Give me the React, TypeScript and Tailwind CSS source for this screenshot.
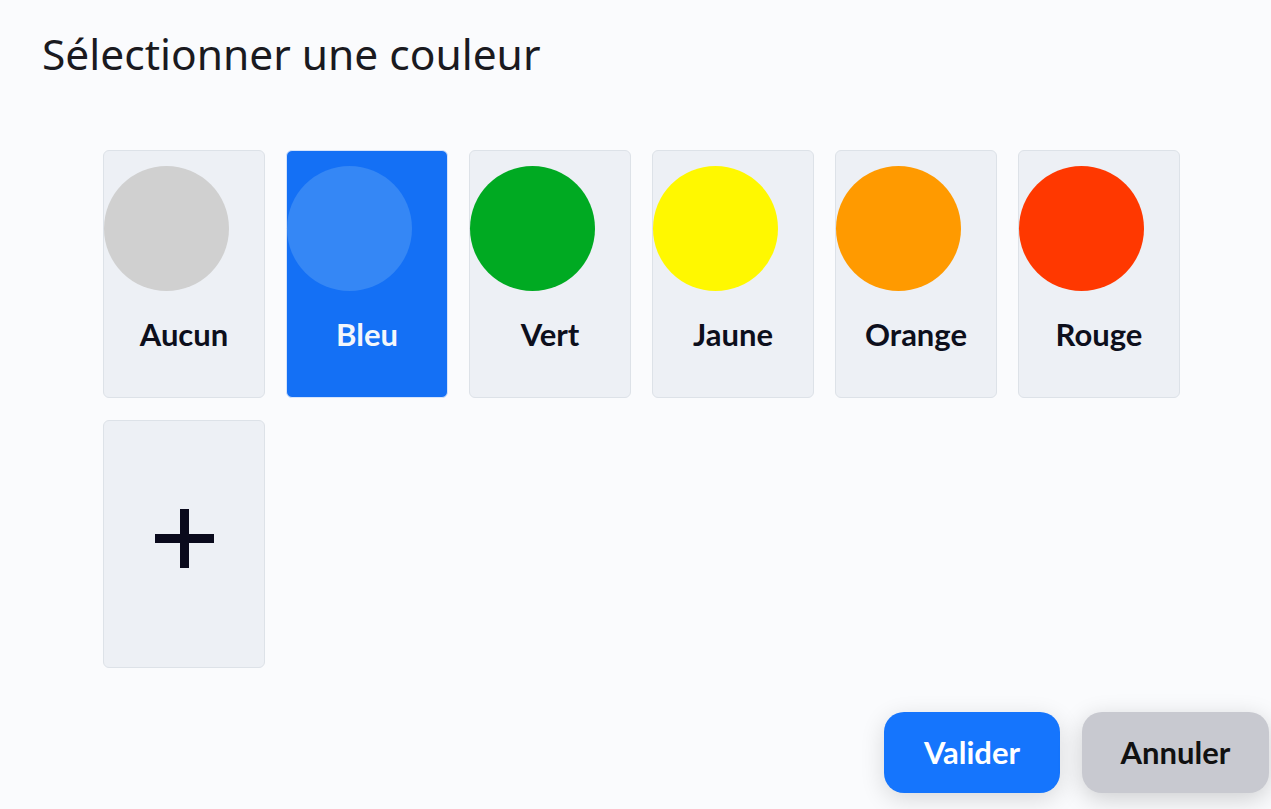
import React from "react";

const colors = [
  { name: "Aucun", color: "bg-[#d0d0d0]", selected: false },
  { name: "Bleu", color: "bg-[#3587f5]", selected: true },
  { name: "Vert", color: "bg-[#00aa22]", selected: false },
  { name: "Jaune", color: "bg-[#fff800]", selected: false },
  { name: "Orange", color: "bg-[#ff9a00]", selected: false },
  { name: "Rouge", color: "bg-[#ff3800]", selected: false },
];

export default function App() {
  return (
    <div className="w-[1271px] h-[809px] bg-[#fafbfd] relative overflow-hidden" style={{ fontFamily: "Lato, sans-serif" }}>
      <h1 className="pl-[42px] pt-[26px] text-[42.5px] leading-[56px] text-[#1a1a1f]" style={{ fontFamily: "'Noto Sans', sans-serif" }}>
        Sélectionner une couleur
      </h1>
      <div className="ml-[103px] mt-[68px] grid grid-cols-[repeat(6,162px)] gap-x-[21px] gap-y-[22px]">
        {colors.map((c) => (
          <div
            key={c.name}
            className={`h-[248px] rounded-[6px] border pt-[15px] flex flex-col ${
              c.selected ? "bg-[#1470f5] border-[#d6e4fb]" : "bg-[#edf0f5] border-[#dde2e8]"
            }`}
          >
            <div className={`w-[125px] h-[125px] rounded-full ${c.color}`} />
            <div
              className={`mt-[25px] text-center text-[31px] font-bold leading-[36px] ${
                c.selected ? "text-[#f3f6fb]" : "text-[#0d0f1c]"
              }`}
            >
              {c.name}
            </div>
          </div>
        ))}
        <div className="h-[248px] rounded-[6px] border bg-[#edf0f5] border-[#dde2e8] flex items-center justify-center pb-[11px]">
          <svg width="59" height="59" viewBox="0 0 59 59">
            <rect x="25" y="0" width="9" height="59" fill="#0a0a1c" />
            <rect x="0" y="25" width="59" height="9" fill="#0a0a1c" />
          </svg>
        </div>
      </div>
      <div className="absolute right-[2px] bottom-[16px] flex gap-[22px]">
        <button className="w-[176px] h-[81px] rounded-[20px] bg-[#1575fd] text-white text-[31px] font-bold shadow-[0_6px_24px_rgba(0,0,0,0.14)]">
          Valider
        </button>
        <button className="w-[187px] h-[81px] rounded-[20px] bg-[#c8c9d0] text-[#111] text-[31px] font-bold shadow-[0_6px_24px_rgba(0,0,0,0.18)]">
          Annuler
        </button>
      </div>
    </div>
  );
}
